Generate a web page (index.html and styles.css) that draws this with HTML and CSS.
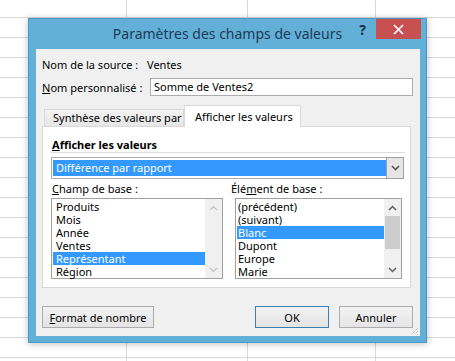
FILE: index.html
```html
<!DOCTYPE html>
<html>
<head>
    <title>Paramètres des champs de valeurs</title>
    <link rel="stylesheet" href="styles.css">
</head>
<body>
    <div class="sheet">
        <div class="dialog">
            <div class="titlebar">
                <span class="title">Paramètres des champs de valeurs</span>
                <div class="title-tools">
                    <span class="help">?</span>
                    <span class="close">
                        <svg width="11" height="11" viewBox="0 0 11 11">
                            <path d="M1 1 L10 10 M10 1 L1 10" stroke="#fff" stroke-width="1.7" fill="none"/>
                        </svg>
                    </span>
                </div>
            </div>

            <div class="client">
                <div class="row row-source">
                    <span class="lbl lbl-source">Nom de la source :</span>
                    <span>Ventes</span>
                </div>
                <div class="row row-custom">
                    <label class="lbl lbl-custom"><u>N</u>om personnalisé :</label>
                    <div class="textbox">Somme de Ventes2</div>
                </div>

                <div class="tabs">
                    <div class="tab">Synthèse des valeurs par</div>
                    <div class="tab active">Afficher les valeurs</div>
                </div>
                <div class="panel">
                    <div class="group-title"><u>A</u>fficher les valeurs</div>
                    <div class="combo">
                        <div class="combo-value"><span class="combo-sel">Différence par rapport</span></div>
                        <div class="combo-btn">
                            <svg width="9" height="6" viewBox="0 0 9 6">
                                <path d="M1 1 L4.5 4.5 L8 1" stroke="#555" stroke-width="1.6" fill="none"/>
                            </svg>
                        </div>
                    </div>
                    <div class="lists">
                        <div class="field">
                            <div class="field-label"><u>C</u>hamp de base :</div>
                            <div class="listbox">
                                <div class="items">
                                    <div class="item">Produits</div>
                                    <div class="item">Mois</div>
                                    <div class="item">Année</div>
                                    <div class="item">Ventes</div>
                                    <div class="item selected">Représentant</div>
                                    <div class="item">Région</div>
                                </div>
                                <div class="scrollbar disabled">
                                    <div class="arrow">
                                        <svg width="9" height="6" viewBox="0 0 9 6"><path d="M1 5 L4.5 1.5 L8 5" stroke="#c8c8c8" stroke-width="1.5" fill="none"/></svg>
                                    </div>
                                    <div class="track"></div>
                                    <div class="arrow">
                                        <svg width="9" height="6" viewBox="0 0 9 6"><path d="M1 1 L4.5 4.5 L8 1" stroke="#c8c8c8" stroke-width="1.5" fill="none"/></svg>
                                    </div>
                                </div>
                            </div>
                        </div>
                        <div class="field field-right">
                            <div class="field-label">Élé<u>m</u>ent de base :</div>
                            <div class="listbox">
                                <div class="items items-right">
                                    <div class="item">(précédent)</div>
                                    <div class="item">(suivant)</div>
                                    <div class="item selected">Blanc</div>
                                    <div class="item">Dupont</div>
                                    <div class="item">Europe</div>
                                    <div class="item">Marie</div>
                                </div>
                                <div class="scrollbar">
                                    <div class="arrow">
                                        <svg width="9" height="6" viewBox="0 0 9 6"><path d="M1 5 L4.5 1.5 L8 5" stroke="#606060" stroke-width="1.5" fill="none"/></svg>
                                    </div>
                                    <div class="track"><div class="thumb"></div></div>
                                    <div class="arrow">
                                        <svg width="9" height="6" viewBox="0 0 9 6"><path d="M1 1 L4.5 4.5 L8 1" stroke="#606060" stroke-width="1.5" fill="none"/></svg>
                                    </div>
                                </div>
                            </div>
                        </div>
                    </div>
                </div>

                <div class="footer">
                    <button class="btn btn-format"><u>F</u>ormat de nombre</button>
                    <button class="btn btn-ok">OK</button>
                    <button class="btn btn-cancel">Annuler</button>
                </div>

                <svg class="grip" width="8" height="8" viewBox="0 0 8 8">
                    <path d="M7 1 L1 7 M7 4 L4 7" stroke="#a0a0a0" stroke-width="1" stroke-dasharray="1 1" fill="none"/>
                </svg>
            </div>
        </div>
    </div>
</body>
</html>
```

FILE: styles.css
```css
* {
    box-sizing: border-box;
}

body {
    margin: 0;
    font-family: "Noto Sans", "Open Sans", sans-serif;
    font-size: 11px;
    color: #000;
}

.sheet {
    position: relative;
    width: 455px;
    height: 361px;
    overflow: hidden;
    background-color: #fff;
    background-image:
        linear-gradient(to right, transparent 126px, #d9d9d9 126px 127px, transparent 127px 247px, #d9d9d9 247px 248px, transparent 248px 375px, #d9d9d9 375px 376px, transparent 376px),
        repeating-linear-gradient(to bottom, transparent 0 17px, #d9d9d9 17px 18px, transparent 18px 20px);
}

/* dialog window floating over the worksheet */
.dialog {
    position: absolute;
    left: 28px;
    top: 18px;
    width: 399px;
    height: 325px;
    display: flex;
    flex-direction: column;
    background-color: #62b0d8;
    border: 1px solid #4a98c6;
    box-shadow: 0 1px 7px rgba(0, 0, 0, 0.25);
}

.titlebar {
    height: 30px;
    display: grid;
    grid-template-columns: 1fr auto 1fr;
    align-items: start;
}

.title {
    grid-column: 2;
    padding-top: 5px;
    line-height: 20px;
    font-size: 14px;
    color: #1e3a56;
    white-space: nowrap;
}

.title-tools {
    grid-column: 3;
    justify-self: end;
    display: flex;
    align-items: flex-start;
    padding-right: 5px;
}

.help {
    margin-right: 10px;
    padding-top: 2px;
    font-size: 14px;
    font-weight: bold;
    color: #1b2f4d;
    line-height: 18px;
}

.close {
    width: 45px;
    height: 20px;
    display: flex;
    align-items: center;
    justify-content: center;
    background-color: #c75050;
}

.client {
    position: relative;
    flex: 1;
    display: flex;
    flex-direction: column;
    margin: 0 6px 6px 7px;
    padding: 7px 7px 8px 6px;
    background-color: #f0f0f0;
    white-space: nowrap;
}

.row {
    display: flex;
    align-items: center;
}

.row-source {
    height: 16px;
}

.lbl-source {
    width: 105px;
}

.row-custom {
    margin-top: 6px;
    height: 18px;
}

.lbl-custom {
    width: 108px;
}

.textbox {
    flex: 1;
    height: 18px;
    padding-left: 3px;
    line-height: 16px;
    background-color: #fff;
    border: 1px solid #abadb3;
}

.tabs {
    display: flex;
    align-items: flex-end;
    height: 21px;
    margin-top: 9px;
    padding-left: 2px;
}

.tab {
    height: 17px;
    width: 140px;
    padding-left: 8px;
    line-height: 16px;
    background: linear-gradient(#f3f3f3, #e6e6e6);
    border: 1px solid #d9d9d9;
    border-bottom: none;
}

.tab.active {
    position: relative;
    z-index: 1;
    height: 22px;
    width: 117px;
    margin-bottom: -1px;
    padding: 3px 0 0 10px;
    background: #fff;
}

.panel {
    height: 162px;
    margin-right: 2px;
    padding: 10px 5px 0 8px;
    background-color: #fff;
    border: 1px solid #d9d9d9;
}

.group-title {
    height: 16px;
    padding-left: 1px;
    line-height: 15px;
    font-weight: bold;
    border-bottom: 1px solid #dcdcdc;
}

.combo {
    display: flex;
    height: 22px;
    margin: 4px 1px 0 0;
}

.combo-value {
    flex: 1;
    padding: 2px 0 2px 1px;
    background-color: #fff;
    border: 1px solid #acacac;
    border-right: none;
}

.combo-sel {
    display: block;
    height: 16px;
    padding-left: 3px;
    line-height: 16px;
    color: #fff;
    background-color: #3399ff;
}

.combo-btn {
    width: 18px;
    display: flex;
    align-items: center;
    justify-content: center;
    background-color: #e5e5e5;
    border: 1px solid #a0a0a0;
}

.lists {
    display: grid;
    grid-template-columns: 172px 171px;
    column-gap: 8px;
    margin-top: 2px;
}

.field-label {
    height: 16px;
    line-height: 16px;
    padding-left: 1px;
    margin-bottom: 1px;
}

.field-right .field-label {
    padding-left: 0;
}

.field-right .listbox {
    margin-left: 4px;
}

.listbox {
    display: flex;
    height: 81px;
    background-color: #fff;
    border: 1px solid #a0a0a0;
}

.items {
    flex: 1;
    padding: 1px 0 0 1px;
}

.item {
    height: 13px;
    line-height: 13px;
    padding-left: 3px;
}

.items-right .item {
    padding-left: 1px;
}

.item.selected {
    color: #fff;
    background-color: #3399ff;
}

.scrollbar {
    width: 17px;
    display: flex;
    flex-direction: column;
    background-color: #f0f0f0;
}

.arrow {
    height: 17px;
    display: flex;
    align-items: center;
    justify-content: center;
}

.track {
    flex: 1;
}

.thumb {
    height: 33px;
    margin: 0 1px;
    background-color: #cdcdcd;
}

.footer {
    display: flex;
    height: 22px;
    margin-top: 18px;
}

.btn {
    height: 22px;
    padding: 0;
    font-family: inherit;
    font-size: 11px;
    color: #000;
    background: linear-gradient(#f2f2f2, #e4e4e4);
    border: 1px solid #acacac;
}

.btn-format {
    width: 112px;
}

.btn-ok {
    width: 74px;
    margin-left: auto;
    border-color: #3c7fb1;
}

.btn-cancel {
    width: 74px;
    margin-left: 10px;
}

.grip {
    position: absolute;
    right: 1px;
    bottom: 1px;
}
```
